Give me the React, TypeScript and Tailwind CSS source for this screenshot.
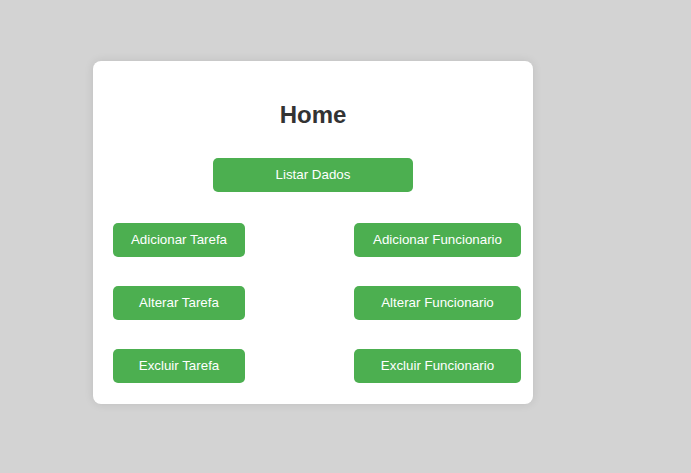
const LEFT = ["Adicionar Tarefa", "Alterar Tarefa", "Excluir Tarefa"];
const RIGHT = ["Adicionar Funcionario", "Alterar Funcionario", "Excluir Funcionario"];

function Btn({ label, width }: { label: string; width: string }) {
  return (
    <button
      className={`${width} h-[34px] rounded-[5px] bg-[#4caf50] text-[13.33px] text-white`}
      style={{ fontFamily: '"Liberation Sans", Arial, sans-serif' }}
    >
      {label}
    </button>
  );
}

export default function App() {
  return (
    <div
      className="min-h-screen w-full bg-[#d3d3d3] pl-[93px] pt-[61px]"
      style={{ fontFamily: '"Liberation Sans", Arial, sans-serif' }}
    >
      <div className="flex w-[440px] flex-col rounded-[8px] bg-white pb-[21px] pl-[20px] pr-[12px] pt-[40px] shadow-[0_0_10px_rgba(0,0,0,0.1)]">
        <h2 className="mr-[8px] text-center text-[24px] font-bold leading-[28px] text-[#333]">Home</h2>
        <div className="mr-[8px] mt-[29px] flex justify-center">
          <Btn label="Listar Dados" width="w-[200px]" />
        </div>
        <div className="mt-[31px] flex justify-between">
          <div className="flex flex-col gap-[29px]">
            {LEFT.map((l) => (
              <Btn key={l} label={l} width="w-[132px]" />
            ))}
          </div>
          <div className="flex flex-col gap-[29px]">
            {RIGHT.map((l) => (
              <Btn key={l} label={l} width="w-[167px]" />
            ))}
          </div>
        </div>
      </div>
    </div>
  );
}
